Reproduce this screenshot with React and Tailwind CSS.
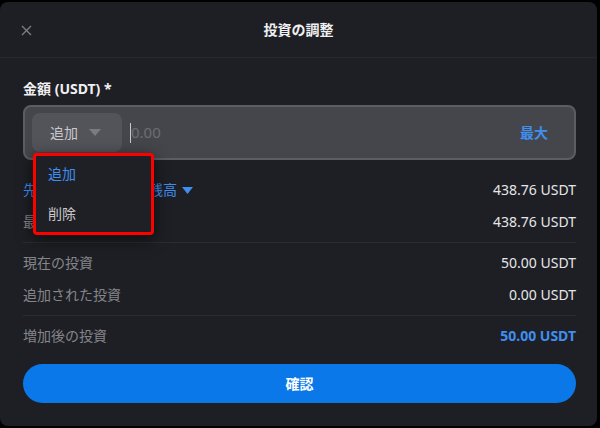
import React from 'react';

const font = { fontFamily: '"Noto Sans", "Noto Sans CJK JP", sans-serif' };

function Row({ label, value, labelClass = 'text-[#85868b]', valueClass = 'text-[#e6e6e8]' }) {
    return (
        <div className="flex h-5 items-center justify-between text-[14px] leading-5">
            <span className={labelClass}>{label}</span>
            <span className={valueClass}>{value}</span>
        </div>
    );
}

export default function App() {
    return (
        <div className="h-[428px] w-[600px] bg-black pt-[2px] pr-[3px]" style={font}>
            <div className="h-[424px] rounded-lg bg-[#1e1f24]">
                {/* header */}
                <div className="relative flex h-14 items-center justify-center border-b border-[#27282d]">
                    <button className="absolute left-[21px] top-[23px] text-[#7c7d82]">
                        <svg width="11" height="11" viewBox="0 0 11 11" fill="none" stroke="currentColor" strokeWidth="1.4">
                            <path d="M1 1l9 9M10 1l-9 9" />
                        </svg>
                    </button>
                    <h2 className="text-[14px] font-bold text-[#f0f0f2]">投資の調整</h2>
                </div>

                <div className="pl-[23px] pr-[21px] pt-[21px]">
                    <div className="text-[14px] font-bold leading-5 text-[#f0f0f2]">金額 (USDT) *</div>

                    <div className="relative mt-1.5 flex h-[55px] items-center rounded-lg border-2 border-[#5c5d62] bg-[#45464b] pl-[7px] pr-[26px]">
                        <div className="flex h-[39px] w-[90px] items-center rounded-lg bg-[#535459] pl-[18px]">
                            <span className="text-[14px] text-[#c9c9cc]">追加</span>
                            <svg className="ml-[11px]" width="12" height="7" viewBox="0 0 12 7">
                                <path d="M0 0h12L6 7z" fill="#7b7c81" />
                            </svg>
                        </div>
                        <div className="ml-2 h-[20px] w-px bg-[#c9c9cc]" />
                        <span className="flex-1 text-[15px] text-[#6c6d72]">0.00</span>
                        <span className="text-[14px] font-bold text-[#3f8ef0]">最大</span>

                        {/* dropdown */}
                        <div className="absolute left-[8px] top-[46px] z-10 h-[82px] w-[121px] rounded border-[3px] border-[#ff0000] bg-[#1f2025] pl-[12px] pt-[4px] shadow-[0_4px_16px_rgba(0,0,0,0.6)]">
                            <div className="flex h-[26px] items-center text-[14px] text-[#3f8ef0]">追加</div>
                            <div className="mt-[14px] flex h-[26px] items-center text-[14px] text-[#c9c9cc]">削除</div>
                        </div>
                    </div>

                    <div className="mt-[20px] flex flex-col gap-3">
                        <div className="flex h-5 items-center justify-between text-[14px] leading-5">
                            <span className="flex items-center text-[#3f8ef0]">
                                先物口座の利用可能残高
                                <svg className="ml-[5px]" width="11" height="7" viewBox="0 0 11 7">
                                    <path d="M0 0h11L5.5 7z" fill="#3f8ef0" />
                                </svg>
                            </span>
                            <span className="text-[#e6e6e8]">438.76 USDT</span>
                        </div>
                        <Row label="最大追加可能額" value="438.76 USDT" />
                    </div>

                    <div className="mt-[10px] border-t border-[#2b2c31]" />

                    <div className="mt-[10px] flex flex-col gap-3">
                        <Row label="現在の投資" value="50.00 USDT" />
                        <Row label="追加された投資" value="0.00 USDT" />
                    </div>

                    <div className="mt-[10px] border-t border-[#2b2c31]" />

                    <div className="mt-[10px]">
                        <Row label="増加後の投資" value="50.00 USDT" valueClass="font-bold text-[#3f8ef0]" />
                    </div>

                    <button className="mt-[18px] flex h-[39px] w-full items-center justify-center rounded-full bg-[#0a78e9] text-[14px] font-bold text-white">
                        確認
                    </button>
                </div>
            </div>
        </div>
    );
}
